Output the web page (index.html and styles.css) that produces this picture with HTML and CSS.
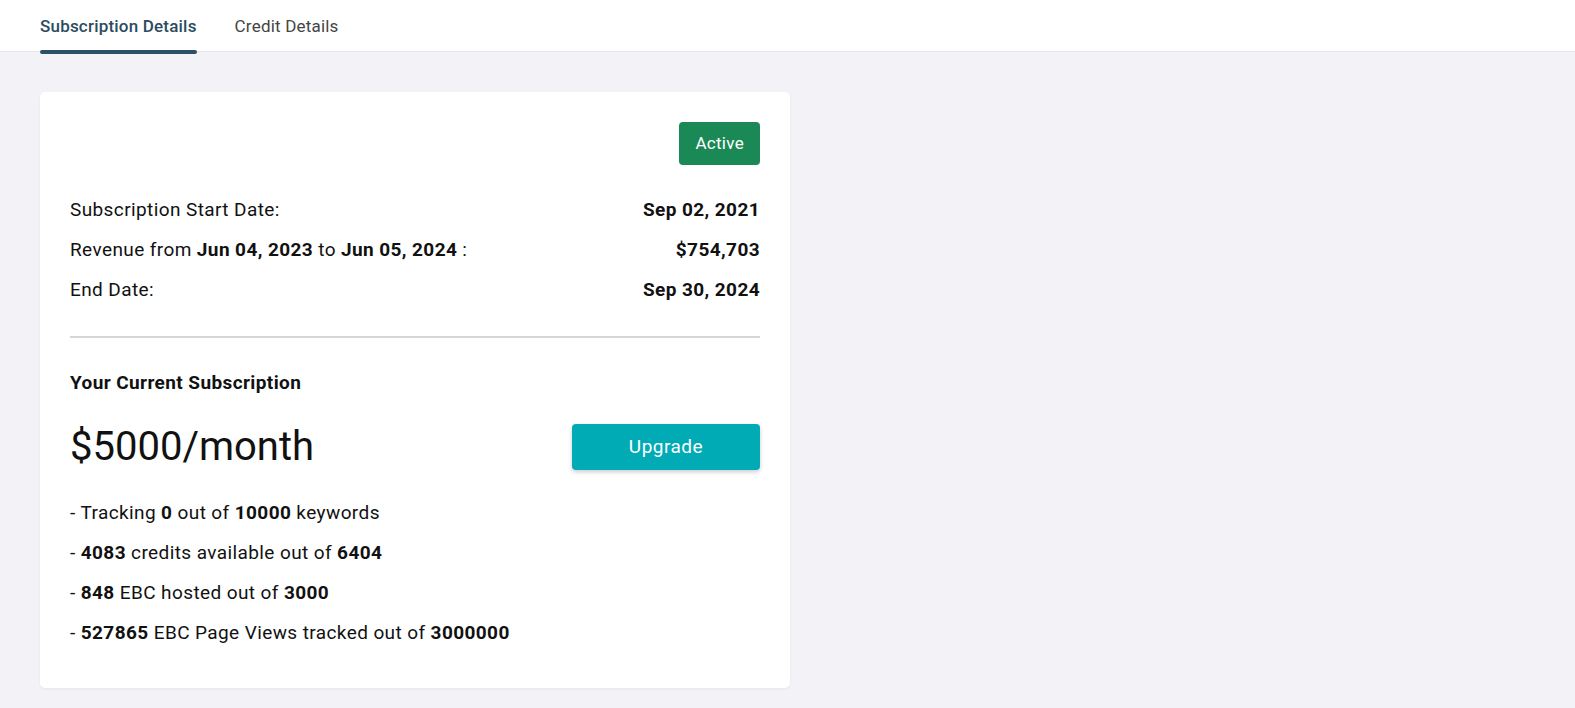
FILE: index.html
```html
<!DOCTYPE html>
<html lang="en">
<head>
    <meta charset="UTF-8">
    <meta name="viewport" content="width=device-width, initial-scale=1.0">
    <title>Subscription Details</title>
    <link rel="stylesheet" href="styles.css">
</head>
<body>
    <div class="tabs">
        <a class="tab active">Subscription Details</a>
        <a class="tab">Credit Details</a>
    </div>

    <div class="content">
        <div class="card">
            <div class="status-row">
                <span class="badge">Active</span>
            </div>

            <div class="info-row">
                <span>Subscription Start Date:</span>
                <b>Sep 02, 2021</b>
            </div>
            <div class="info-row">
                <span>Revenue from <b>Jun 04, 2023</b> to <b>Jun 05, 2024</b> :</span>
                <b>$754,703</b>
            </div>
            <div class="info-row">
                <span>End Date:</span>
                <b>Sep 30, 2024</b>
            </div>

            <hr class="divider">

            <h3 class="plan-title">Your Current Subscription</h3>
            <div class="plan-row">
                <span class="plan-price">$5000/month</span>
                <button class="upgrade-btn">Upgrade</button>
            </div>

            <ul class="usage-list">
                <li>- Tracking <b>0</b> out of <b>10000</b> keywords</li>
                <li>- <b>4083</b> credits available out of <b>6404</b></li>
                <li>- <b>848</b> EBC hosted out of <b>3000</b></li>
                <li>- <b>527865</b> EBC Page Views tracked out of <b>3000000</b></li>
            </ul>
        </div>
    </div>
</body>
</html>
```

FILE: styles.css
```css
body {
    font-family: Roboto, "Liberation Sans", sans-serif;
    background-color: #f2f2f7;
    color: #111;
    margin: 0;
    min-height: 100vh;
}

.tabs {
    display: flex;
    gap: 38px;
    background-color: #fff;
    border-bottom: 1px solid #e6e6ec;
    padding: 0 40px;
    height: 51px;
}

.tab {
    font-size: 17px;
    letter-spacing: 0.2px;
    color: #444;
    padding-top: 16px;
    position: relative;
    cursor: pointer;
}

.tab.active {
    color: #2c4b60;
    font-weight: 500;
}

.tab.active::after {
    content: "";
    position: absolute;
    left: 0;
    right: 0;
    bottom: -3px;
    height: 4px;
    border-radius: 2px;
    background-color: #2d5068;
}

.content {
    padding: 40px;
}

.card {
    width: 690px;
    background-color: #fff;
    border-radius: 5px;
    box-shadow: 0 1px 3px rgba(0, 0, 0, 0.06);
    padding: 30px 30px 35px;
}

.status-row {
    display: flex;
    justify-content: flex-end;
    margin-bottom: 25px;
}

.badge {
    background-color: #1b8956;
    color: #fff;
    font-size: 17px;
    letter-spacing: 0.3px;
    border-radius: 4px;
    padding: 0 16px;
    height: 43px;
    line-height: 43px;
}

.info-row {
    display: flex;
    justify-content: space-between;
    font-size: 19px;
    letter-spacing: 0.4px;
    line-height: 40px;
}

.info-row b {
    font-weight: 700;
}

.divider {
    border: none;
    border-top: 2px solid #d6d6d6;
    margin: 26px 0 33px;
}

.plan-title {
    font-size: 19px;
    letter-spacing: 0.4px;
    font-weight: 700;
    margin: 0 0 29px;
}

.plan-row {
    display: flex;
    justify-content: space-between;
    align-items: center;
    margin-bottom: 23px;
}

.plan-price {
    font-size: 40px;
}

.upgrade-btn {
    font-family: inherit;
    font-size: 19px;
    letter-spacing: 0.5px;
    color: #fff;
    background-color: #00abb5;
    border: none;
    border-radius: 4px;
    width: 188px;
    height: 46px;
    box-shadow: 0 2px 4px rgba(0, 0, 0, 0.2);
    cursor: pointer;
}

.usage-list {
    list-style: none;
    margin: 0;
    padding: 0;
    font-size: 19px;
    letter-spacing: 0.4px;
    line-height: 40px;
}
```
